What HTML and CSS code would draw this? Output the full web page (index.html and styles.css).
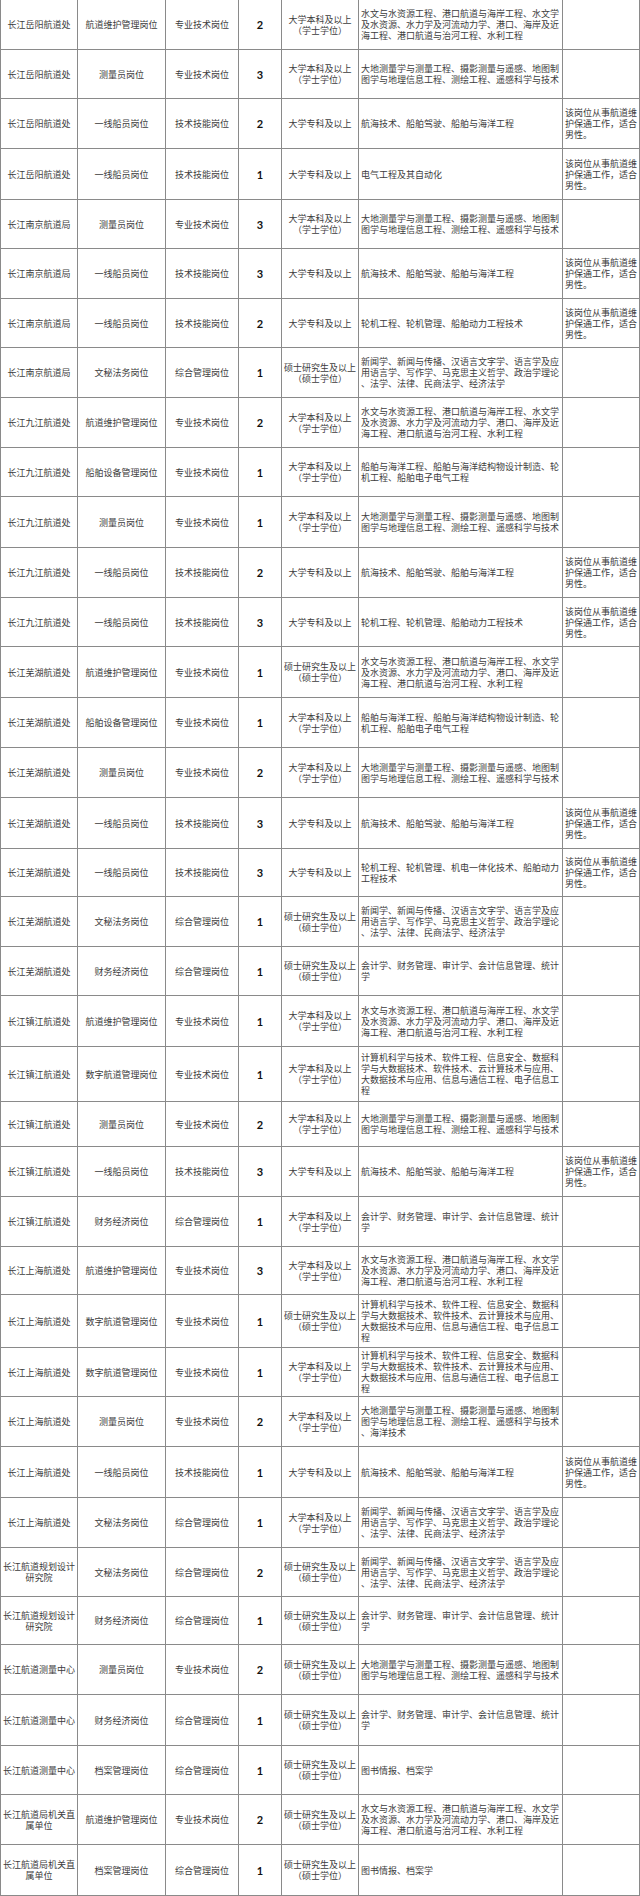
FILE: index.html
```html
<!DOCTYPE html>
<html lang="zh-CN">
<head>
<meta charset="utf-8">
<title>岗位表</title>
<link rel="stylesheet" href="styles.css">
</head>
<body>
<div class="sheet">

<div class="row h50">
  <div class="cell">长江岳阳航道处</div><div class="cell">航道维护管理岗位</div><div class="cell">专业技术岗位</div><div class="cell num">2</div>
  <div class="cell"><span class="ln">大学本科及以上</span><span class="ln">（学士学位）</span></div>
  <div class="cell major"><span class="ln">水文与水资源工程、港口航道与海岸工程、水文学</span><span class="ln">及水资源、水力学及河流动力学、港口、海岸及近</span><span class="ln">海工程、港口航道与治河工程、水利工程</span></div>
  <div class="cell note"></div>
</div>

<div class="row h49">
  <div class="cell">长江岳阳航道处</div><div class="cell">测量员岗位</div><div class="cell">专业技术岗位</div><div class="cell num">3</div>
  <div class="cell"><span class="ln">大学本科及以上</span><span class="ln">（学士学位）</span></div>
  <div class="cell major"><span class="ln">大地测量学与测量工程、摄影测量与遥感、地图制</span><span class="ln">图学与地理信息工程、测绘工程、遥感科学与技术</span></div>
  <div class="cell note"></div>
</div>

<div class="row h50">
  <div class="cell">长江岳阳航道处</div><div class="cell">一线船员岗位</div><div class="cell">技术技能岗位</div><div class="cell num">2</div>
  <div class="cell">大学专科及以上</div>
  <div class="cell major"><span class="ln">航海技术、船舶驾驶、船舶与海洋工程</span></div>
  <div class="cell note"><span class="ln">该岗位从事航道维</span><span class="ln">护保通工作，适合</span><span class="ln">男性。</span></div>
</div>

<div class="row h51">
  <div class="cell">长江岳阳航道处</div><div class="cell">一线船员岗位</div><div class="cell">技术技能岗位</div><div class="cell num">1</div>
  <div class="cell">大学专科及以上</div>
  <div class="cell major"><span class="ln">电气工程及其自动化</span></div>
  <div class="cell note"><span class="ln">该岗位从事航道维</span><span class="ln">护保通工作，适合</span><span class="ln">男性。</span></div>
</div>

<div class="row h49">
  <div class="cell">长江南京航道局</div><div class="cell">测量员岗位</div><div class="cell">专业技术岗位</div><div class="cell num">3</div>
  <div class="cell"><span class="ln">大学本科及以上</span><span class="ln">（学士学位）</span></div>
  <div class="cell major"><span class="ln">大地测量学与测量工程、摄影测量与遥感、地图制</span><span class="ln">图学与地理信息工程、测绘工程、遥感科学与技术</span></div>
  <div class="cell note"></div>
</div>

<div class="row h50">
  <div class="cell">长江南京航道局</div><div class="cell">一线船员岗位</div><div class="cell">技术技能岗位</div><div class="cell num">3</div>
  <div class="cell">大学专科及以上</div>
  <div class="cell major"><span class="ln">航海技术、船舶驾驶、船舶与海洋工程</span></div>
  <div class="cell note"><span class="ln">该岗位从事航道维</span><span class="ln">护保通工作，适合</span><span class="ln">男性。</span></div>
</div>

<div class="row h49">
  <div class="cell">长江南京航道局</div><div class="cell">一线船员岗位</div><div class="cell">技术技能岗位</div><div class="cell num">2</div>
  <div class="cell">大学专科及以上</div>
  <div class="cell major"><span class="ln">轮机工程、轮机管理、船舶动力工程技术</span></div>
  <div class="cell note"><span class="ln">该岗位从事航道维</span><span class="ln">护保通工作，适合</span><span class="ln">男性。</span></div>
</div>

<div class="row h50">
  <div class="cell">长江南京航道局</div><div class="cell">文秘法务岗位</div><div class="cell">综合管理岗位</div><div class="cell num">1</div>
  <div class="cell"><span class="ln">硕士研究生及以上</span><span class="ln">（硕士学位）</span></div>
  <div class="cell major"><span class="ln">新闻学、新闻与传播、汉语言文字学、语言学及应</span><span class="ln">用语言学、写作学、马克思主义哲学、政治学理论</span><span class="ln">、法学、法律、民商法学、经济法学</span></div>
  <div class="cell note"></div>
</div>

<div class="row h50">
  <div class="cell">长江九江航道处</div><div class="cell">航道维护管理岗位</div><div class="cell">专业技术岗位</div><div class="cell num">2</div>
  <div class="cell"><span class="ln">大学本科及以上</span><span class="ln">（学士学位）</span></div>
  <div class="cell major"><span class="ln">水文与水资源工程、港口航道与海岸工程、水文学</span><span class="ln">及水资源、水力学及河流动力学、港口、海岸及近</span><span class="ln">海工程、港口航道与治河工程、水利工程</span></div>
  <div class="cell note"></div>
</div>

<div class="row h49">
  <div class="cell">长江九江航道处</div><div class="cell">船舶设备管理岗位</div><div class="cell">专业技术岗位</div><div class="cell num">1</div>
  <div class="cell"><span class="ln">大学本科及以上</span><span class="ln">（学士学位）</span></div>
  <div class="cell major"><span class="ln">船舶与海洋工程、船舶与海洋结构物设计制造、轮</span><span class="ln">机工程、船舶电子电气工程</span></div>
  <div class="cell note"></div>
</div>

<div class="row h51">
  <div class="cell">长江九江航道处</div><div class="cell">测量员岗位</div><div class="cell">专业技术岗位</div><div class="cell num">1</div>
  <div class="cell"><span class="ln">大学本科及以上</span><span class="ln">（学士学位）</span></div>
  <div class="cell major"><span class="ln">大地测量学与测量工程、摄影测量与遥感、地图制</span><span class="ln">图学与地理信息工程、测绘工程、遥感科学与技术</span></div>
  <div class="cell note"></div>
</div>

<div class="row h50">
  <div class="cell">长江九江航道处</div><div class="cell">一线船员岗位</div><div class="cell">技术技能岗位</div><div class="cell num">2</div>
  <div class="cell">大学专科及以上</div>
  <div class="cell major"><span class="ln">航海技术、船舶驾驶、船舶与海洋工程</span></div>
  <div class="cell note"><span class="ln">该岗位从事航道维</span><span class="ln">护保通工作，适合</span><span class="ln">男性。</span></div>
</div>

<div class="row h49">
  <div class="cell">长江九江航道处</div><div class="cell">一线船员岗位</div><div class="cell">技术技能岗位</div><div class="cell num">3</div>
  <div class="cell">大学专科及以上</div>
  <div class="cell major"><span class="ln">轮机工程、轮机管理、船舶动力工程技术</span></div>
  <div class="cell note"><span class="ln">该岗位从事航道维</span><span class="ln">护保通工作，适合</span><span class="ln">男性。</span></div>
</div>

<div class="row h51">
  <div class="cell">长江芜湖航道处</div><div class="cell">航道维护管理岗位</div><div class="cell">专业技术岗位</div><div class="cell num">1</div>
  <div class="cell"><span class="ln">硕士研究生及以上</span><span class="ln">（硕士学位）</span></div>
  <div class="cell major"><span class="ln">水文与水资源工程、港口航道与海岸工程、水文学</span><span class="ln">及水资源、水力学及河流动力学、港口、海岸及近</span><span class="ln">海工程、港口航道与治河工程、水利工程</span></div>
  <div class="cell note"></div>
</div>

<div class="row h50">
  <div class="cell">长江芜湖航道处</div><div class="cell">船舶设备管理岗位</div><div class="cell">专业技术岗位</div><div class="cell num">1</div>
  <div class="cell"><span class="ln">大学本科及以上</span><span class="ln">（学士学位）</span></div>
  <div class="cell major"><span class="ln">船舶与海洋工程、船舶与海洋结构物设计制造、轮</span><span class="ln">机工程、船舶电子电气工程</span></div>
  <div class="cell note"></div>
</div>

<div class="row h50">
  <div class="cell">长江芜湖航道处</div><div class="cell">测量员岗位</div><div class="cell">专业技术岗位</div><div class="cell num">2</div>
  <div class="cell"><span class="ln">大学本科及以上</span><span class="ln">（学士学位）</span></div>
  <div class="cell major"><span class="ln">大地测量学与测量工程、摄影测量与遥感、地图制</span><span class="ln">图学与地理信息工程、测绘工程、遥感科学与技术</span></div>
  <div class="cell note"></div>
</div>

<div class="row h51">
  <div class="cell">长江芜湖航道处</div><div class="cell">一线船员岗位</div><div class="cell">技术技能岗位</div><div class="cell num">3</div>
  <div class="cell">大学专科及以上</div>
  <div class="cell major"><span class="ln">航海技术、船舶驾驶、船舶与海洋工程</span></div>
  <div class="cell note"><span class="ln">该岗位从事航道维</span><span class="ln">护保通工作，适合</span><span class="ln">男性。</span></div>
</div>

<div class="row h48">
  <div class="cell">长江芜湖航道处</div><div class="cell">一线船员岗位</div><div class="cell">技术技能岗位</div><div class="cell num">3</div>
  <div class="cell">大学专科及以上</div>
  <div class="cell major"><span class="ln">轮机工程、轮机管理、机电一体化技术、船舶动力</span><span class="ln">工程技术</span></div>
  <div class="cell note"><span class="ln">该岗位从事航道维</span><span class="ln">护保通工作，适合</span><span class="ln">男性。</span></div>
</div>

<div class="row h50">
  <div class="cell">长江芜湖航道处</div><div class="cell">文秘法务岗位</div><div class="cell">综合管理岗位</div><div class="cell num">1</div>
  <div class="cell"><span class="ln">硕士研究生及以上</span><span class="ln">（硕士学位）</span></div>
  <div class="cell major"><span class="ln">新闻学、新闻与传播、汉语言文字学、语言学及应</span><span class="ln">用语言学、写作学、马克思主义哲学、政治学理论</span><span class="ln">、法学、法律、民商法学、经济法学</span></div>
  <div class="cell note"></div>
</div>

<div class="row h49">
  <div class="cell">长江芜湖航道处</div><div class="cell">财务经济岗位</div><div class="cell">综合管理岗位</div><div class="cell num">1</div>
  <div class="cell"><span class="ln">硕士研究生及以上</span><span class="ln">（硕士学位）</span></div>
  <div class="cell major"><span class="ln">会计学、财务管理、审计学、会计信息管理、统计</span><span class="ln">学</span></div>
  <div class="cell note"></div>
</div>

<div class="row h51">
  <div class="cell">长江镇江航道处</div><div class="cell">航道维护管理岗位</div><div class="cell">专业技术岗位</div><div class="cell num">1</div>
  <div class="cell"><span class="ln">大学本科及以上</span><span class="ln">（学士学位）</span></div>
  <div class="cell major"><span class="ln">水文与水资源工程、港口航道与海岸工程、水文学</span><span class="ln">及水资源、水力学及河流动力学、港口、海岸及近</span><span class="ln">海工程、港口航道与治河工程、水利工程</span></div>
  <div class="cell note"></div>
</div>

<div class="row h55">
  <div class="cell">长江镇江航道处</div><div class="cell">数字航道管理岗位</div><div class="cell">专业技术岗位</div><div class="cell num">1</div>
  <div class="cell"><span class="ln">大学本科及以上</span><span class="ln">（学士学位）</span></div>
  <div class="cell major"><span class="ln">计算机科学与技术、软件工程、信息安全、数据科</span><span class="ln">学与大数据技术、软件技术、云计算技术与应用、</span><span class="ln">大数据技术与应用、信息与通信工程、电子信息工</span><span class="ln">程</span></div>
  <div class="cell note"></div>
</div>

<div class="row h45">
  <div class="cell">长江镇江航道处</div><div class="cell">测量员岗位</div><div class="cell">专业技术岗位</div><div class="cell num">2</div>
  <div class="cell"><span class="ln">大学本科及以上</span><span class="ln">（学士学位）</span></div>
  <div class="cell major"><span class="ln">大地测量学与测量工程、摄影测量与遥感、地图制</span><span class="ln">图学与地理信息工程、测绘工程、遥感科学与技术</span></div>
  <div class="cell note"></div>
</div>

<div class="row h50">
  <div class="cell">长江镇江航道处</div><div class="cell">一线船员岗位</div><div class="cell">技术技能岗位</div><div class="cell num">3</div>
  <div class="cell">大学专科及以上</div>
  <div class="cell major"><span class="ln">航海技术、船舶驾驶、船舶与海洋工程</span></div>
  <div class="cell note"><span class="ln">该岗位从事航道维</span><span class="ln">护保通工作，适合</span><span class="ln">男性。</span></div>
</div>

<div class="row h50">
  <div class="cell">长江镇江航道处</div><div class="cell">财务经济岗位</div><div class="cell">综合管理岗位</div><div class="cell num">1</div>
  <div class="cell"><span class="ln">大学本科及以上</span><span class="ln">（学士学位）</span></div>
  <div class="cell major"><span class="ln">会计学、财务管理、审计学、会计信息管理、统计</span><span class="ln">学</span></div>
  <div class="cell note"></div>
</div>

<div class="row h48">
  <div class="cell">长江上海航道处</div><div class="cell">航道维护管理岗位</div><div class="cell">专业技术岗位</div><div class="cell num">3</div>
  <div class="cell"><span class="ln">大学本科及以上</span><span class="ln">（学士学位）</span></div>
  <div class="cell major"><span class="ln">水文与水资源工程、港口航道与海岸工程、水文学</span><span class="ln">及水资源、水力学及河流动力学、港口、海岸及近</span><span class="ln">海工程、港口航道与治河工程、水利工程</span></div>
  <div class="cell note"></div>
</div>

<div class="row h53">
  <div class="cell">长江上海航道处</div><div class="cell">数字航道管理岗位</div><div class="cell">专业技术岗位</div><div class="cell num">1</div>
  <div class="cell"><span class="ln">硕士研究生及以上</span><span class="ln">（硕士学位）</span></div>
  <div class="cell major"><span class="ln">计算机科学与技术、软件工程、信息安全、数据科</span><span class="ln">学与大数据技术、软件技术、云计算技术与应用、</span><span class="ln">大数据技术与应用、信息与通信工程、电子信息工</span><span class="ln">程</span></div>
  <div class="cell note"></div>
</div>

<div class="row h49">
  <div class="cell">长江上海航道处</div><div class="cell">数字航道管理岗位</div><div class="cell">专业技术岗位</div><div class="cell num">1</div>
  <div class="cell"><span class="ln">大学本科及以上</span><span class="ln">（学士学位）</span></div>
  <div class="cell major"><span class="ln">计算机科学与技术、软件工程、信息安全、数据科</span><span class="ln">学与大数据技术、软件技术、云计算技术与应用、</span><span class="ln">大数据技术与应用、信息与通信工程、电子信息工</span><span class="ln">程</span></div>
  <div class="cell note"></div>
</div>

<div class="row h50">
  <div class="cell">长江上海航道处</div><div class="cell">测量员岗位</div><div class="cell">专业技术岗位</div><div class="cell num">2</div>
  <div class="cell"><span class="ln">大学本科及以上</span><span class="ln">（学士学位）</span></div>
  <div class="cell major"><span class="ln">大地测量学与测量工程、摄影测量与遥感、地图制</span><span class="ln">图学与地理信息工程、测绘工程、遥感科学与技术</span><span class="ln">、海洋技术</span></div>
  <div class="cell note"></div>
</div>

<div class="row h51">
  <div class="cell">长江上海航道处</div><div class="cell">一线船员岗位</div><div class="cell">技术技能岗位</div><div class="cell num">1</div>
  <div class="cell">大学专科及以上</div>
  <div class="cell major"><span class="ln">航海技术、船舶驾驶、船舶与海洋工程</span></div>
  <div class="cell note"><span class="ln">该岗位从事航道维</span><span class="ln">护保通工作，适合</span><span class="ln">男性。</span></div>
</div>

<div class="row h50">
  <div class="cell">长江上海航道处</div><div class="cell">文秘法务岗位</div><div class="cell">综合管理岗位</div><div class="cell num">1</div>
  <div class="cell"><span class="ln">大学本科及以上</span><span class="ln">（学士学位）</span></div>
  <div class="cell major"><span class="ln">新闻学、新闻与传播、汉语言文字学、语言学及应</span><span class="ln">用语言学、写作学、马克思主义哲学、政治学理论</span><span class="ln">、法学、法律、民商法学、经济法学</span></div>
  <div class="cell note"></div>
</div>

<div class="row h49">
  <div class="cell"><span class="ln">长江航道规划设计</span><span class="ln">研究院</span></div><div class="cell">文秘法务岗位</div><div class="cell">综合管理岗位</div><div class="cell num">2</div>
  <div class="cell"><span class="ln">硕士研究生及以上</span><span class="ln">（硕士学位）</span></div>
  <div class="cell major"><span class="ln">新闻学、新闻与传播、汉语言文字学、语言学及应</span><span class="ln">用语言学、写作学、马克思主义哲学、政治学理论</span><span class="ln">、法学、法律、民商法学、经济法学</span></div>
  <div class="cell note"></div>
</div>

<div class="row h48">
  <div class="cell"><span class="ln">长江航道规划设计</span><span class="ln">研究院</span></div><div class="cell">财务经济岗位</div><div class="cell">综合管理岗位</div><div class="cell num">1</div>
  <div class="cell"><span class="ln">硕士研究生及以上</span><span class="ln">（硕士学位）</span></div>
  <div class="cell major"><span class="ln">会计学、财务管理、审计学、会计信息管理、统计</span><span class="ln">学</span></div>
  <div class="cell note"></div>
</div>

<div class="row h50">
  <div class="cell">长江航道测量中心</div><div class="cell">测量员岗位</div><div class="cell">专业技术岗位</div><div class="cell num">2</div>
  <div class="cell"><span class="ln">硕士研究生及以上</span><span class="ln">（硕士学位）</span></div>
  <div class="cell major"><span class="ln">大地测量学与测量工程、摄影测量与遥感、地图制</span><span class="ln">图学与地理信息工程、测绘工程、遥感科学与技术</span></div>
  <div class="cell note"></div>
</div>

<div class="row h51">
  <div class="cell">长江航道测量中心</div><div class="cell">财务经济岗位</div><div class="cell">综合管理岗位</div><div class="cell num">1</div>
  <div class="cell"><span class="ln">硕士研究生及以上</span><span class="ln">（硕士学位）</span></div>
  <div class="cell major"><span class="ln">会计学、财务管理、审计学、会计信息管理、统计</span><span class="ln">学</span></div>
  <div class="cell note"></div>
</div>

<div class="row h49">
  <div class="cell">长江航道测量中心</div><div class="cell">档案管理岗位</div><div class="cell">综合管理岗位</div><div class="cell num">1</div>
  <div class="cell"><span class="ln">硕士研究生及以上</span><span class="ln">（硕士学位）</span></div>
  <div class="cell major"><span class="ln">图书情报、档案学</span></div>
  <div class="cell note"></div>
</div>

<div class="row h50">
  <div class="cell"><span class="ln">长江航道局机关直</span><span class="ln">属单位</span></div><div class="cell">航道维护管理岗位</div><div class="cell">专业技术岗位</div><div class="cell num">2</div>
  <div class="cell"><span class="ln">硕士研究生及以上</span><span class="ln">（硕士学位）</span></div>
  <div class="cell major"><span class="ln">水文与水资源工程、港口航道与海岸工程、水文学</span><span class="ln">及水资源、水力学及河流动力学、港口、海岸及近</span><span class="ln">海工程、港口航道与治河工程、水利工程</span></div>
  <div class="cell note"></div>
</div>

<div class="row h51">
  <div class="cell"><span class="ln">长江航道局机关直</span><span class="ln">属单位</span></div><div class="cell">档案管理岗位</div><div class="cell">综合管理岗位</div><div class="cell num">1</div>
  <div class="cell"><span class="ln">硕士研究生及以上</span><span class="ln">（硕士学位）</span></div>
  <div class="cell major"><span class="ln">图书情报、档案学</span></div>
  <div class="cell note"></div>
</div>

</div>
</body>
</html>
```

FILE: styles.css
```css
html, body {
  margin: 0;
  padding: 0;
  background: #ffffff;
}

.sheet {
  width: 640px;
  font-family: "Noto Sans CJK SC", "Noto Sans CJK JP", sans-serif;
  font-size: 9px;
  line-height: 11px;
  color: #3c3c3c;
}

.row {
  display: grid;
  grid-template-columns: 78px 88px 73px 43px 77px 204px 77px;
  box-sizing: border-box;
}

.h45 { height: 45px; }
.h48 { height: 48px; }
.h49 { height: 49px; }
.h50 { height: 50px; }
.h51 { height: 51px; }
.h53 { height: 53px; }
.h55 { height: 55px; }

.cell {
  box-sizing: border-box;
  border-right: 1px solid #8a8a8a;
  border-bottom: 1px solid #8a8a8a;
  display: flex;
  flex-direction: column;
  justify-content: center;
  align-items: center;
  text-align: center;
  overflow: hidden;
  white-space: nowrap;
}

.cell:first-child {
  border-left: 1px solid #8a8a8a;
}

.major,
.note {
  align-items: flex-start;
  text-align: left;
  padding-left: 2px;
}

.num {
  font-family: Lato, "Liberation Sans", sans-serif;
  font-weight: 700;
  font-size: 11px;
  color: #111111;
}

.ln {
  display: block;
  white-space: nowrap;
}
```
